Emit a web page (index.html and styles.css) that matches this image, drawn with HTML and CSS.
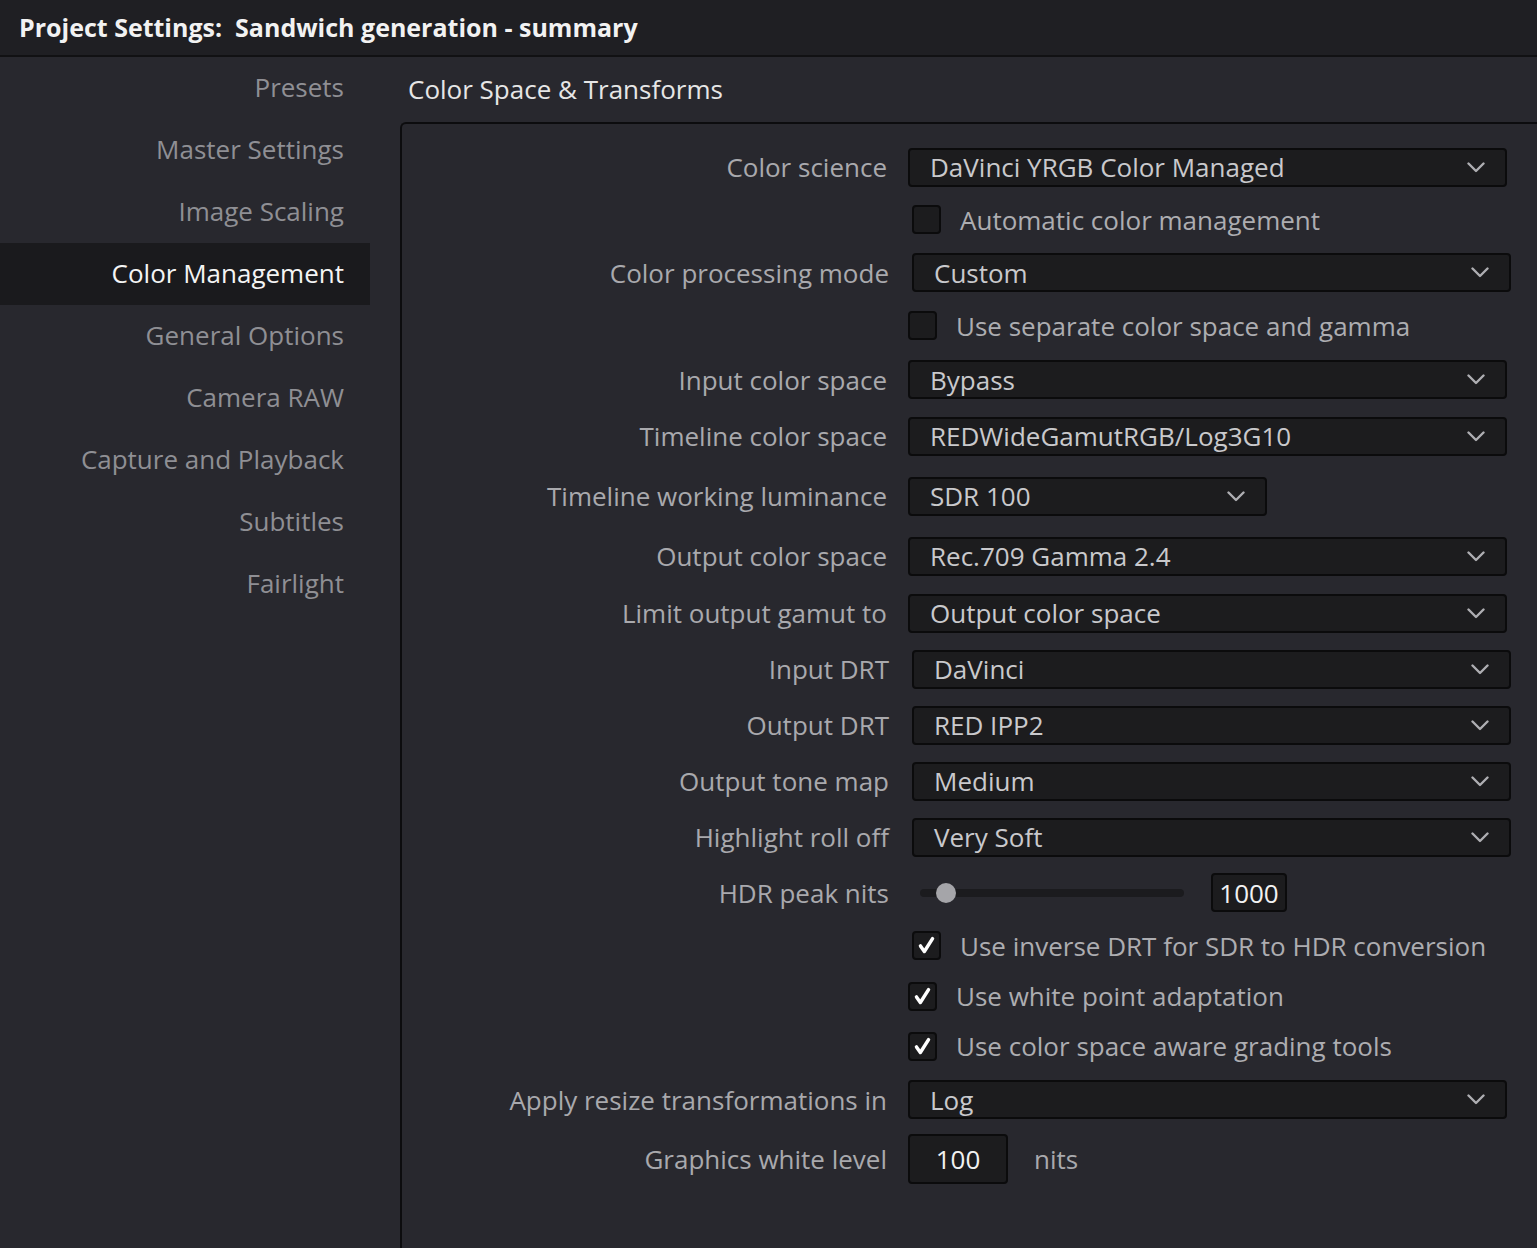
FILE: index.html
```html
<!DOCTYPE html>
<html>
<head>
<meta charset="utf-8">
<link rel="stylesheet" href="styles.css">
</head>
<body>
<div class="titlebar">Project Settings:&nbsp; Sandwich generation - summary</div>
<div class="main">
  <nav class="sidebar">
    <div class="nav-item">Presets</div>
    <div class="nav-item">Master Settings</div>
    <div class="nav-item">Image Scaling</div>
    <div class="nav-item active">Color Management</div>
    <div class="nav-item">General Options</div>
    <div class="nav-item">Camera RAW</div>
    <div class="nav-item">Capture and Playback</div>
    <div class="nav-item">Subtitles</div>
    <div class="nav-item">Fairlight</div>
  </nav>
  <section class="content">
    <h1 class="section-title">Color Space &amp; Transforms</h1>
    <div class="panel">
      <div class="row h52">
        <div class="label">Color science</div>
        <div class="ctrl"><div class="select full"><span>DaVinci YRGB Color Managed</span><svg class="chev" viewBox="0 0 18 11"><path d="M1.5 1.5 L9 9 L16.5 1.5"/></svg></div></div>
      </div>
      <div class="row h53 shift">
        <div class="label"></div>
        <div class="ctrl"><label class="check"><span class="box"></span><span class="ctext">Automatic color management</span></label></div>
      </div>
      <div class="row h53 shift">
        <div class="label">Color processing mode</div>
        <div class="ctrl"><div class="select full"><span>Custom</span><svg class="chev" viewBox="0 0 18 11"><path d="M1.5 1.5 L9 9 L16.5 1.5"/></svg></div></div>
      </div>
      <div class="row h53">
        <div class="label"></div>
        <div class="ctrl"><label class="check"><span class="box"></span><span class="ctext">Use separate color space and gamma</span></label></div>
      </div>
      <div class="row h55">
        <div class="label">Input color space</div>
        <div class="ctrl"><div class="select full"><span>Bypass</span><svg class="chev" viewBox="0 0 18 11"><path d="M1.5 1.5 L9 9 L16.5 1.5"/></svg></div></div>
      </div>
      <div class="row h58">
        <div class="label">Timeline color space</div>
        <div class="ctrl"><div class="select full"><span>REDWideGamutRGB/Log3G10</span><svg class="chev" viewBox="0 0 18 11"><path d="M1.5 1.5 L9 9 L16.5 1.5"/></svg></div></div>
      </div>
      <div class="row h62">
        <div class="label">Timeline working luminance</div>
        <div class="ctrl"><div class="select short"><span>SDR 100</span><svg class="chev" viewBox="0 0 18 11"><path d="M1.5 1.5 L9 9 L16.5 1.5"/></svg></div></div>
      </div>
      <div class="row h58">
        <div class="label">Output color space</div>
        <div class="ctrl"><div class="select full"><span>Rec.709 Gamma 2.4</span><svg class="chev" viewBox="0 0 18 11"><path d="M1.5 1.5 L9 9 L16.5 1.5"/></svg></div></div>
      </div>
      <div class="row h56">
        <div class="label">Limit output gamut to</div>
        <div class="ctrl"><div class="select full"><span>Output color space</span><svg class="chev" viewBox="0 0 18 11"><path d="M1.5 1.5 L9 9 L16.5 1.5"/></svg></div></div>
      </div>
      <div class="row h56 shift">
        <div class="label">Input DRT</div>
        <div class="ctrl"><div class="select full"><span>DaVinci</span><svg class="chev" viewBox="0 0 18 11"><path d="M1.5 1.5 L9 9 L16.5 1.5"/></svg></div></div>
      </div>
      <div class="row h56 shift">
        <div class="label">Output DRT</div>
        <div class="ctrl"><div class="select full"><span>RED IPP2</span><svg class="chev" viewBox="0 0 18 11"><path d="M1.5 1.5 L9 9 L16.5 1.5"/></svg></div></div>
      </div>
      <div class="row h56 shift">
        <div class="label">Output tone map</div>
        <div class="ctrl"><div class="select full"><span>Medium</span><svg class="chev" viewBox="0 0 18 11"><path d="M1.5 1.5 L9 9 L16.5 1.5"/></svg></div></div>
      </div>
      <div class="row h56 shift">
        <div class="label">Highlight roll off</div>
        <div class="ctrl"><div class="select full"><span>Very Soft</span><svg class="chev" viewBox="0 0 18 11"><path d="M1.5 1.5 L9 9 L16.5 1.5"/></svg></div></div>
      </div>
      <div class="row h55 shift">
        <div class="label">HDR peak nits</div>
        <div class="ctrl slider-ctrl">
          <div class="slider"><div class="track"></div><div class="thumb"></div></div>
          <div class="numbox">1000</div>
        </div>
      </div>
      <div class="row h51 shift">
        <div class="label"></div>
        <div class="ctrl"><label class="check"><span class="box checked"><svg viewBox="0 0 29 29"><path d="M7.5 15 L12 21.5 L21.5 6.5"/></svg></span><span class="ctext">Use inverse DRT for SDR to HDR conversion</span></label></div>
      </div>
      <div class="row h50">
        <div class="label"></div>
        <div class="ctrl"><label class="check"><span class="box checked"><svg viewBox="0 0 29 29"><path d="M7.5 15 L12 21.5 L21.5 6.5"/></svg></span><span class="ctext">Use white point adaptation</span></label></div>
      </div>
      <div class="row h50">
        <div class="label"></div>
        <div class="ctrl"><label class="check"><span class="box checked"><svg viewBox="0 0 29 29"><path d="M7.5 15 L12 21.5 L21.5 6.5"/></svg></span><span class="ctext">Use color space aware grading tools</span></label></div>
      </div>
      <div class="row h57">
        <div class="label">Apply resize transformations in</div>
        <div class="ctrl"><div class="select full"><span>Log</span><svg class="chev" viewBox="0 0 18 11"><path d="M1.5 1.5 L9 9 L16.5 1.5"/></svg></div></div>
      </div>
      <div class="row h62">
        <div class="label">Graphics white level</div>
        <div class="ctrl"><div class="numbox big">100</div><span class="unit">nits</span></div>
      </div>
    </div>
  </section>
</div>
</body>
</html>
```
FILE: styles.css
```css
* { box-sizing: border-box; }
html, body {
  margin: 0;
  padding: 0;
  width: 1537px;
  height: 1248px;
  overflow: hidden;
  background: #28282e;
  font-family: "Open Sans", "Noto Sans", sans-serif;
}
.titlebar {
  height: 57px;
  background: #1f1f23;
  border-bottom: 2px solid #111113;
  color: #f2f2f2;
  font-weight: 700;
  font-size: 25px;
  line-height: 55px;
  padding-left: 19px;
  white-space: pre;
}
.main {
  display: flex;
  height: 1191px;
}
.sidebar {
  width: 370px;
  flex: none;
}
.nav-item {
  height: 62px;
  line-height: 61px;
  text-align: right;
  padding-right: 26px;
  font-size: 26px;
  color: #8f8f94;
}
.nav-item.active {
  background: #1a1a1d;
  color: #f4f4f4;
}
.content {
  flex: 1;
  padding-left: 30px;
  display: flex;
  flex-direction: column;
}
.section-title {
  margin: 0;
  height: 65px;
  padding-left: 8px;
  font-weight: 400;
  font-size: 26px;
  line-height: 64px;
  color: #e6e6e6;
}
.panel {
  flex: 1;
  border: 2px solid #0c0c0e;
  border-right: none;
  border-bottom: none;
  border-top-left-radius: 6px;
  padding-top: 17px;
}
.row {
  display: flex;
  align-items: center;
}
.h50 { height: 50px; }
.h51 { height: 51px; }
.h52 { height: 52px; }
.h53 { height: 53px; }
.h54 { height: 54px; }
.h55 { height: 55px; }
.h56 { height: 56px; }
.h57 { height: 57px; }
.h58 { height: 58px; }
.h62 { height: 62px; }
.label {
  width: 485px;
  flex: none;
  text-align: right;
  font-size: 26px;
  color: #a9a9ad;
  white-space: nowrap;
}
.ctrl {
  margin-left: 21px;
  display: flex;
  align-items: center;
}
.shift .label { width: 487px; }
.shift .ctrl { margin-left: 23px; }
.select {
  height: 39px;
  background: #1c1c1e;
  border: 2px solid #0b0b0c;
  border-radius: 4px;
  display: flex;
  align-items: center;
  justify-content: space-between;
  padding: 0 20px 0 20px;
  font-size: 26px;
  color: #c9c9cc;
}
.select.full { width: 599px; }
.select.short { width: 359px; }
.chev {
  width: 18px;
  height: 11px;
  fill: none;
  stroke: #aeaeb2;
  stroke-width: 2.4;
  stroke-linecap: round;
  stroke-linejoin: round;
}
.check {
  display: flex;
  align-items: center;
}
.box {
  width: 29px;
  height: 29px;
  background: #1c1c1e;
  border: 2px solid #0b0b0c;
  border-radius: 4px;
  display: flex;
  align-items: center;
  justify-content: center;
}
.box svg {
  width: 27px;
  height: 27px;
  fill: none;
  stroke: #ffffff;
  stroke-width: 4;
  stroke-linecap: round;
  stroke-linejoin: round;
}
.ctext {
  margin-left: 19px;
  font-size: 26px;
  color: #adadb1;
  white-space: nowrap;
}
.slider {
  position: relative;
  width: 264px;
  height: 22px;
  margin-left: 8px;
}
.track {
  position: absolute;
  left: 0;
  right: 0;
  top: 7px;
  height: 8px;
  border-radius: 4px;
  background: #1b1b1e;
}
.thumb {
  position: absolute;
  left: 16px;
  top: 1px;
  width: 20px;
  height: 20px;
  border-radius: 50%;
  background: #a5a5a9;
}
.numbox {
  margin-left: 27px;
  width: 76px;
  height: 39px;
  background: #1c1c1e;
  border: 2px solid #0b0b0c;
  border-radius: 4px;
  color: #f2f2f2;
  font-size: 26px;
  display: flex;
  align-items: center;
  justify-content: center;
}
.numbox.big {
  margin-left: 0;
  width: 100px;
  height: 50px;
}
.unit {
  margin-left: 26px;
  font-size: 26px;
  color: #a9a9ad;
}
```
